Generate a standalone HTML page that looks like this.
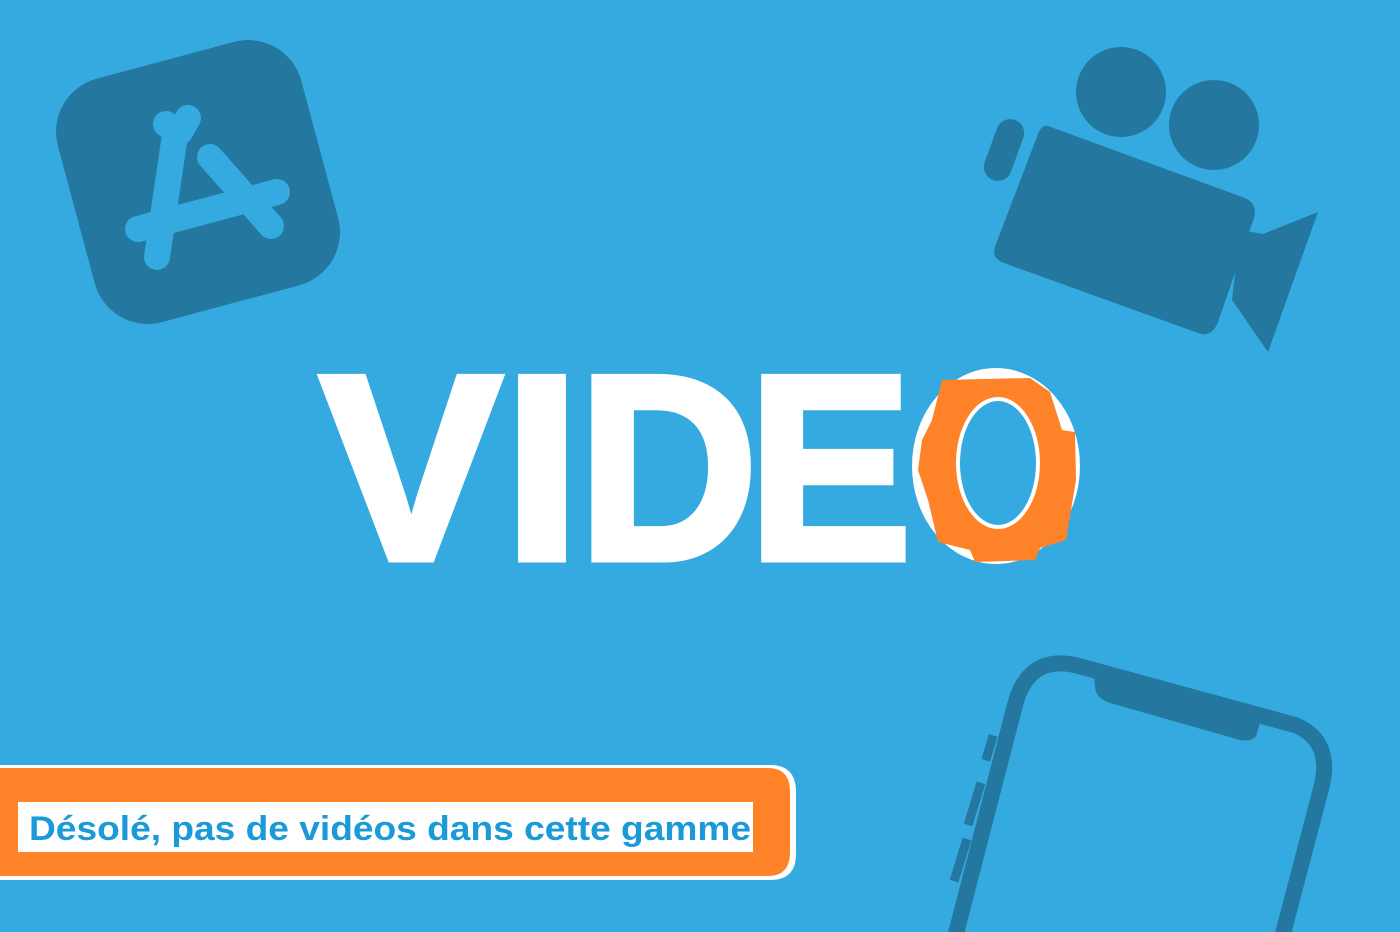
<!DOCTYPE html>
<html><head><meta charset="utf-8"><style>
html,body{margin:0;padding:0;background:#35aae0;width:1400px;height:932px;overflow:hidden}
svg{display:block}
</style></head><body>
<svg width="1400" height="932" viewBox="0 0 1400 932" xmlns="http://www.w3.org/2000/svg">
<rect width="1400" height="932" fill="#35aae0"/>
<!-- app store icon -->
<g transform="rotate(-15 198 182)">
<rect x="72" y="56" width="252" height="252" rx="55" fill="#24789f"/>
</g>
<g stroke="#35aae0" stroke-width="26" stroke-linecap="round" fill="none">
<line x1="176" y1="128" x2="157" y2="257"/>
<line x1="166" y1="124" x2="176" y2="132"/>
<line x1="188" y1="118" x2="180" y2="132"/>
<line x1="210" y1="157" x2="271" y2="226"/>
<line x1="138" y1="229" x2="277" y2="192"/>
</g>
<!-- camera -->
<g fill="#24789f">
<circle cx="1121" cy="92" r="45"/>
<circle cx="1214" cy="125" r="45"/>
<rect x="990" y="118" width="28" height="64" rx="14" transform="rotate(20 1004 150)"/>
<path d="M1048,126 L1245,198 Q1258,204 1254,218 L1218,322 Q1212,338 1198,333 L1004,263 Q990,258 996,244 L1038,134 Q1042,124 1048,126 Z"/>
<path d="M1240,230 L1263,234 L1318,212 L1268,352 L1232,300 Z"/>
</g>
<!-- phone -->
<g fill="none" stroke="#24789f" stroke-width="16" stroke-linejoin="round">
<path d="M953,945 L1015,705 Q1028,655 1075,665 L1295,725 Q1332,740 1322,785 L1280,945"/>
</g>
<g fill="#24789f">
<path d="M1093,668 L1262,716 L1256,736 Q1252,742 1240,740 L1110,703 Q1095,698 1095,686 Z"/>
<rect x="985" y="735" width="9" height="26" transform="rotate(17 990 748)"/>
<rect x="970" y="782" width="9" height="44" transform="rotate(17 975 804)"/>
<rect x="956" y="838" width="9" height="44" transform="rotate(17 960 860)"/>
</g>
<!-- VIDEO -->
<g font-family="Liberation Sans, sans-serif" font-weight="bold" font-size="264" fill="#fff" stroke="#fff" stroke-width="7" stroke-linejoin="miter">
<text x="320" y="559" textLength="182" lengthAdjust="spacingAndGlyphs">V</text>
<text x="503" y="559" textLength="78" lengthAdjust="spacingAndGlyphs">I</text>
<text x="578" y="559" textLength="180" lengthAdjust="spacingAndGlyphs">D</text>
<text x="748" y="559" textLength="164" lengthAdjust="spacingAndGlyphs">E</text>
</g>
<ellipse cx="996" cy="466" rx="84" ry="98" fill="#fff"/>
<path fill="#fe8228" d="M942,380 L1030,378 L1050,392 L1062,430 L1075,432 L1076,480 L1066,540 L1040,548 L1035,560 L975,562 L970,550 L938,542 L928,500 L918,470 L922,440 L932,420 Z"/>
<ellipse cx="998" cy="463" rx="42" ry="66" fill="#fff"/>
<ellipse cx="998" cy="463" rx="38" ry="62" fill="#35aae0"/>
<!-- banner -->
<path d="M0,765 L770,765 Q796,765 796,792 L796,854 Q796,880 770,880 L0,880 Z" fill="#fff"/>
<path d="M0,768 L768,768 Q790,768 790,792 L790,852 Q790,876 768,876 L0,876 Z" fill="#fe8228"/>
<rect x="18" y="802" width="735" height="50" fill="#fff"/>
<text x="29" y="840" font-family="Liberation Sans, sans-serif" font-weight="bold" font-size="34" fill="#1a9ad6" textLength="722" lengthAdjust="spacingAndGlyphs">Désolé, pas de vidéos dans cette gamme</text>
</svg>
</body></html>
